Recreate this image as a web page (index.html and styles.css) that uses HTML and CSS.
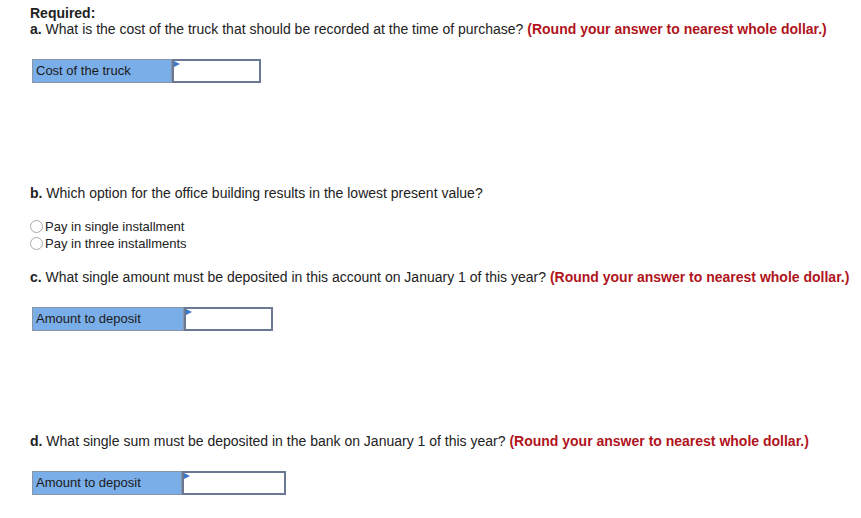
FILE: index.html
```html
<!DOCTYPE html>
<html>
<head>
<meta charset="utf-8">
<link rel="stylesheet" href="styles.css">
</head>
<body>
<div class="page">
  <div class="req">Required:</div>
  <p class="q"><b>a.</b> What is the cost of the truck that should be recorded at the time of purchase? <span class="hint">(Round your answer to nearest whole dollar.)</span></p>
  <div class="ans ans-a">
    <div class="lbl">Cost of the truck</div>
    <div class="inp"></div>
  </div>

  <p class="q q-gap"><b>b.</b> Which option for the office building results in the lowest present value?</p>
  <div class="radios">
    <label class="radio"><span class="dot"></span>Pay in single installment</label>
    <label class="radio"><span class="dot"></span>Pay in three installments</label>
  </div>

  <p class="q q-c"><b>c.</b> What single amount must be deposited in this account on January 1 of this year? <span class="hint">(Round your answer to nearest whole dollar.)</span></p>
  <div class="ans ans-c">
    <div class="lbl">Amount to deposit</div>
    <div class="inp"></div>
  </div>

  <p class="q q-gap"><b>d.</b> What single sum must be deposited in the bank on January 1 of this year? <span class="hint">(Round your answer to nearest whole dollar.)</span></p>
  <div class="ans ans-d">
    <div class="lbl">Amount to deposit</div>
    <div class="inp"></div>
  </div>
</div>
</body>
</html>
```
FILE: styles.css
```css
html, body { margin: 0; padding: 0; background: #fff; }
body {
  font-family: "Liberation Sans", Arial, sans-serif;
  font-size: 14px;
  line-height: 16px;
  color: #222;
}
.page { padding: 5px 0 0 30px; }
.req { font-weight: bold; }
.q { margin: 0; white-space: nowrap; }
.q b { font-weight: bold; }
.hint { color: #b0141c; font-weight: bold; }
.ans {
  display: flex;
  margin: 22px 0 0 2px;
  height: 24px;
}
.lbl {
  background: #7aaee8;
  border: 1px solid #8a95a8;
  box-sizing: border-box;
  padding: 0 3px;
  display: flex;
  align-items: center;
  font-size: 13px;
  color: #1a1a1a;
}
.inp {
  position: relative;
  border: 2px solid #6a7894;
  box-sizing: border-box;
  background: #fff;
}
.inp::before {
  content: "";
  position: absolute;
  left: 0;
  top: 0;
  border-left: 6px solid #3a78c8;
  border-top: 3px solid transparent;
  border-bottom: 3px solid transparent;
}
.ans-a .lbl { width: 140px; }
.ans-a .inp { width: 89px; }
.ans-c .lbl { width: 152px; }
.ans-c .inp { width: 89px; }
.ans-d .lbl { width: 150px; }
.ans-d .inp { width: 104px; }
.q-gap { margin-top: 102px; }
.radios { margin-top: 17px; display: flex; flex-direction: column; }
.radio {
  display: flex;
  align-items: center;
  height: 17px;
  font-size: 13px;
  color: #222;
}
.dot {
  width: 13px;
  height: 13px;
  border: 1px solid #aaa;
  border-radius: 50%;
  margin-right: 2px;
  box-sizing: border-box;
}
.q-c { margin-top: 17px; }
```
